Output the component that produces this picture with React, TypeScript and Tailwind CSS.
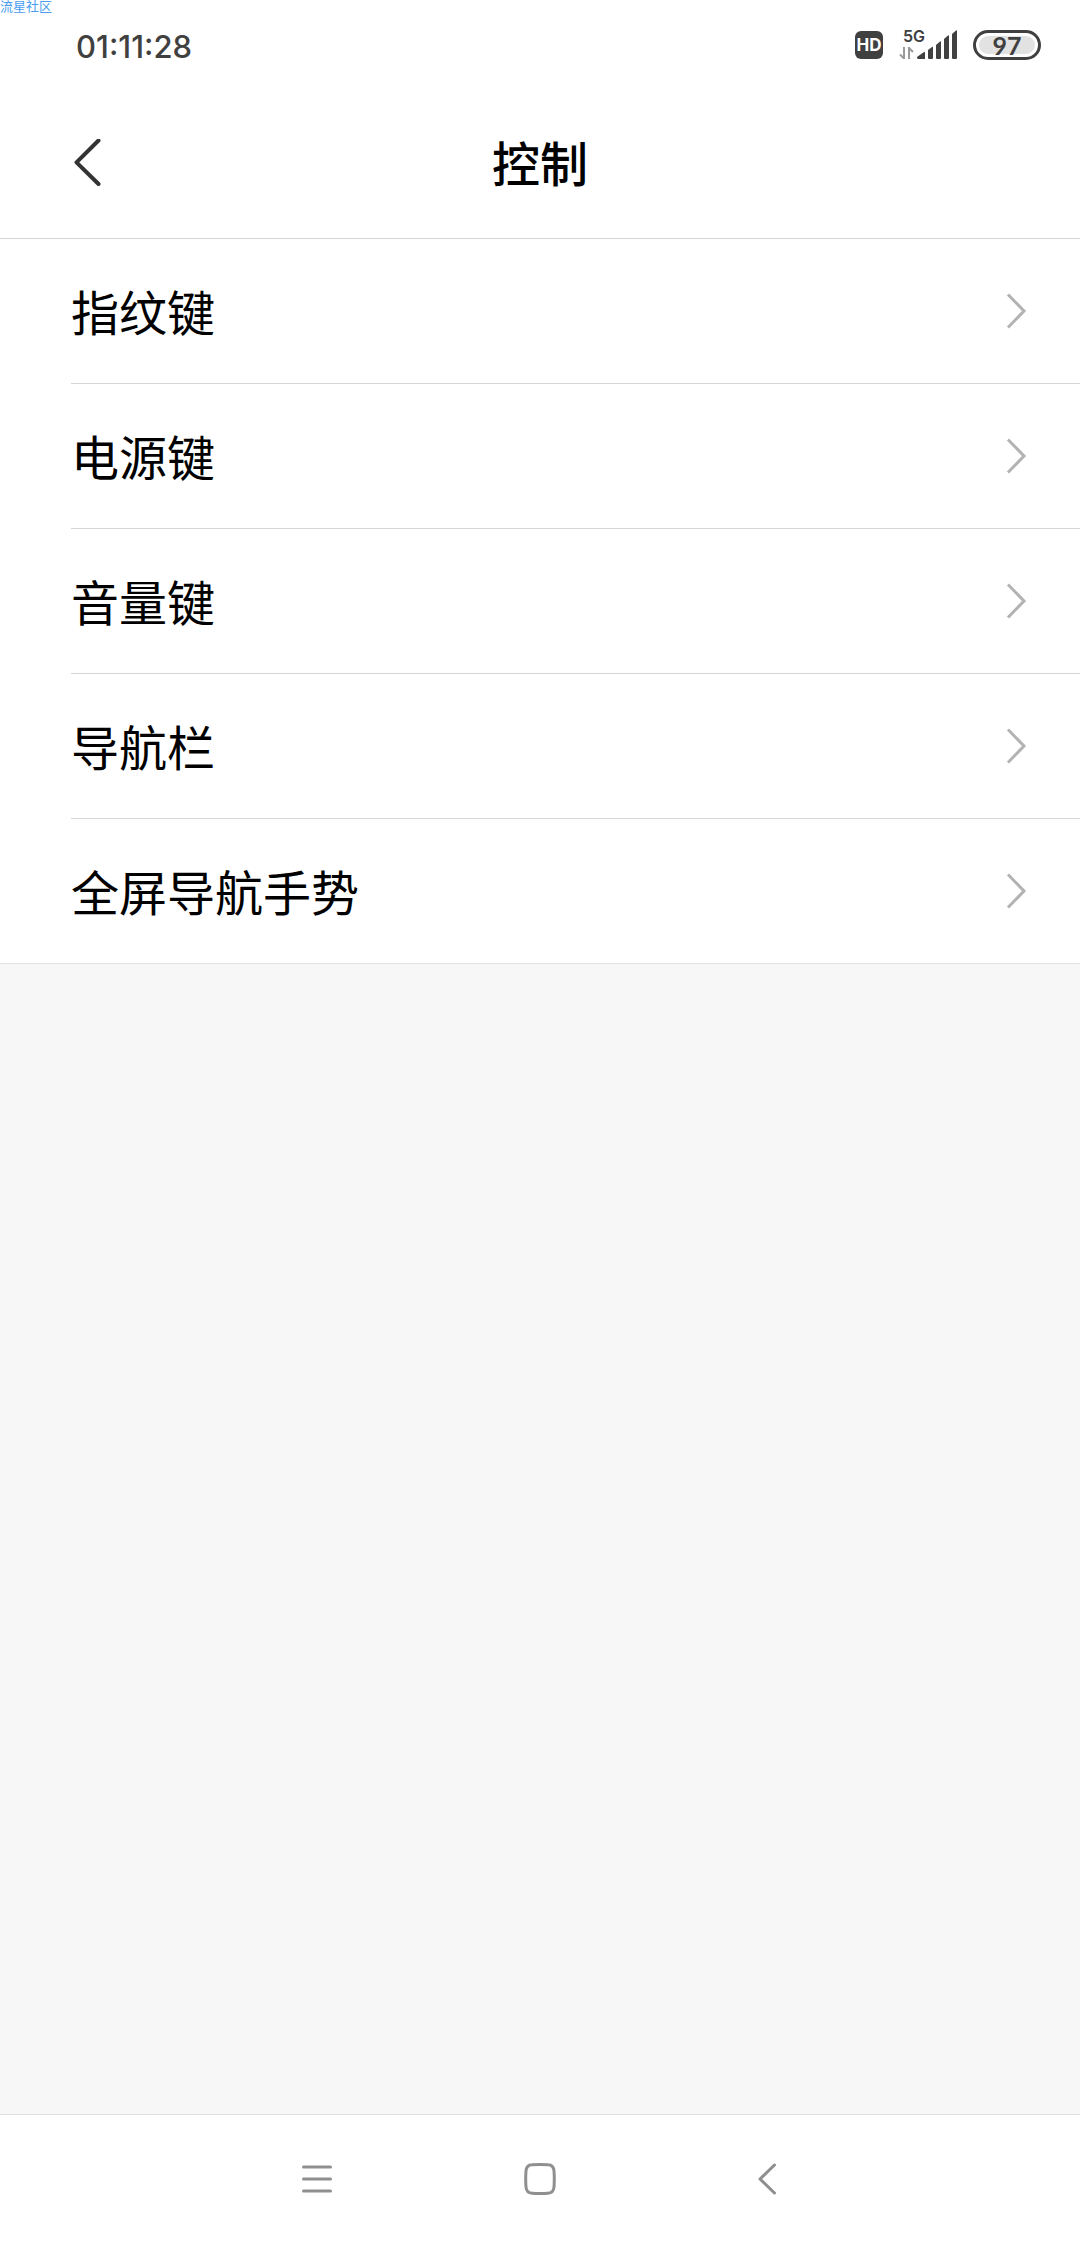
import React from 'react';

const menuItems = [
  { id: 'fingerprint', label: '指纹键' },
  { id: 'power', label: '电源键' },
  { id: 'volume', label: '音量键' },
  { id: 'navbar', label: '导航栏' },
  { id: 'gestures', label: '全屏导航手势' }
];

const SignalIcon: React.FC = () => (
  <svg width="58" height="18" viewBox="0 0 58 18" className="overflow-visible" aria-hidden="true">
    <g fill="none" stroke="#9a9a9a" strokeWidth="2">
      <path d="M5 5v12M1 12.500l4 4M10 17V5M10 6l4 4" />
    </g>
    <g fill="#404040">
      <path d="M18 15l7-5q1-.6 1 .6V17H19q-1 0-1-2z" />
      <path d="M29 8l4-3q1-.6 1 .5V16q0 1-1 1h-3q-1 0-1-1z" />
      <path d="M37 3l4-3.500q1-.6 1 .5V16q0 1-1 1h-3q-1 0-1-1z" />
      <path d="M45-3l4-3.500q1-.6 1 .5V16q0 1-1 1h-3q-1 0-1-1z" />
      <path d="M53-8l4-3.500q1-.6 1 .5V16q0 1-1 1h-3q-1 0-1-1z" />
    </g>
  </svg>
);

const StatusBar: React.FC = () => (
  <div className="flex h-[90px] items-center justify-between pr-[39px] pl-[76px] font-['Inter',sans-serif] text-[#404040]">
    <span className="pt-0.5 text-[31px] leading-none font-medium">01:11:28</span>
    <div className="flex items-center">
      <span className="mr-4 flex h-7 w-7 items-center justify-center rounded-md bg-[#404040] text-[17px] leading-none font-bold text-white">
        HD
      </span>
      <div className="mr-4 flex h-[30px] w-[58px] flex-col justify-between">
        <span className="pl-1 text-base leading-3 font-semibold">5G</span>
        <SignalIcon />
      </div>
      <div className="flex h-[30px] w-[68px] rounded-full border-3 border-[#404040] p-[3px]">
        <span className="flex flex-1 items-center justify-center rounded-full bg-[#e2e2e2] font-['Lato',sans-serif] text-[25px] leading-none font-bold">
          97
        </span>
      </div>
    </div>
  </div>
);

const App: React.FC = () => {
  return (
    <div className="relative flex min-h-screen flex-col bg-[#f7f7f7] font-['Noto_Sans_CJK_SC',sans-serif] text-black">
      {/* Watermark */}
      <span className="absolute top-0 left-0 text-[13px] leading-3 text-[#4a9df0]">流星社区</span>

      {/* Header */}
      <header className="border-b border-[#d6d6d6] bg-white">
        <StatusBar />
        <div className="grid h-[148px] grid-cols-[1fr_auto_1fr] items-center px-[72px]">
          <button type="button" aria-label="返回" className="justify-self-start">
            <svg width="32" height="50" viewBox="0 0 32 50" fill="none" stroke="#333333" strokeWidth="4" strokeLinecap="round" strokeLinejoin="round">
              <path d="M26.500 1.500L4.500 23.300L26.500 45" />
            </svg>
          </button>
          <h1 className="pb-1.5 text-5xl leading-none font-medium">控制</h1>
        </div>
      </header>

      {/* Settings list */}
      <main className="flex-1">
        <ul className="border-b border-[#e2e2e2] bg-white pl-[71px]">
          {menuItems.map(item => (
            <li key={item.id} className="border-b border-[#d6d6d6] last:border-b-0">
              <button type="button" className="flex h-36 w-full items-center justify-between pr-[52px] text-left">
                <span className="pb-0.5 text-5xl leading-none">{item.label}</span>
                <svg width="22" height="36" viewBox="0 0 22 36" fill="none" stroke="#b3b3b3" strokeWidth="3" aria-hidden="true">
                  <path d="M2 1.500L18 18L2 34.500" />
                </svg>
              </button>
            </li>
          ))}
        </ul>
      </main>

      {/* System navigation */}
      <nav className="flex h-[130px] justify-center border-t border-[#dedede] bg-white pb-0.5 text-[#8f8f8f]">
        <button type="button" aria-label="最近任务" className="flex w-56 items-center justify-center">
          <svg width="32" height="32" viewBox="0 0 32 32" fill="none" stroke="currentColor" strokeWidth="3" strokeLinecap="round">
            <path d="M3.500 4h27M3.500 16h27M3.500 28h27" />
          </svg>
        </button>
        <button type="button" aria-label="主屏幕" className="flex w-56 items-center justify-center">
          <svg width="32" height="32" viewBox="0 0 32 32" fill="none" stroke="currentColor" strokeWidth="3">
            <path d="M8 1.800Q16 1.200 24 1.800Q29.500 2 30 8Q30.600 16 30 24Q29.500 30 24 30.200Q16 30.800 8 30.200Q2.500 30 2 24Q1.400 16 2 8Q2.500 2 8 1.800Z" />
          </svg>
        </button>
        <button type="button" aria-label="返回上一级" className="flex w-56 items-center justify-center">
          <svg width="32" height="34" viewBox="0 0 32 34" fill="none" stroke="currentColor" strokeWidth="3" strokeLinecap="round" strokeLinejoin="round">
            <path d="M26.500 3L12 17L26.500 31" />
          </svg>
        </button>
      </nav>
    </div>
  );
};

export default App;
